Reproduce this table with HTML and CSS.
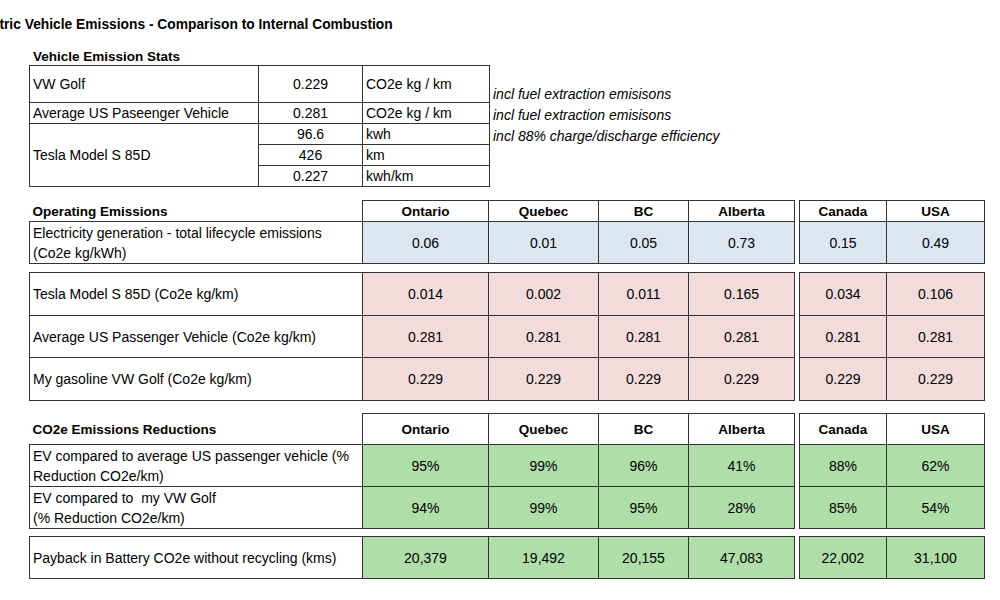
FILE: index.html
```html
<!DOCTYPE html>
<html>
<head>
<meta charset="utf-8">
<title>Electric Vehicle Emissions</title>
<link rel="stylesheet" href="styles.css">
</head>
<body>
<div class="title">Electric Vehicle Emissions - Comparison to Internal Combustion</div>
<div class="sheet">
  <div class="section-label">Vehicle Emission Stats</div>
  <table class="stats">
    <colgroup><col class="c-label"><col class="c-val"><col class="c-unit"><col class="c-note"></colgroup>
    <tr class="s38"><td>VW Golf</td><td class="num">0.229</td><td>CO2e kg / km</td><td class="note">incl fuel extraction emisisons</td></tr>
    <tr class="s20"><td>Average US Paseenger Vehicle</td><td class="num">0.281</td><td>CO2e kg / km</td><td class="note">incl fuel extraction emisisons</td></tr>
    <tr class="s21"><td rowspan="3">Tesla Model S 85D</td><td class="num">96.6</td><td>kwh</td><td class="note">incl 88% charge/discharge efficiency</td></tr>
    <tr class="s20"><td class="num">426</td><td>km</td><td class="note"></td></tr>
    <tr class="s21"><td class="num">0.227</td><td>kwh/km</td><td class="note"></td></tr>
  </table>

  <table class="grid">
    <colgroup>
      <col class="g-label"><col class="g-on"><col class="g-qc"><col class="g-bc"><col class="g-ab"><col class="g-gap"><col class="g-ca"><col class="g-us">
    </colgroup>
    <tr class="r21">
      <td class="blank sec">Operating Emissions</td>
      <td class="head">Ontario</td><td class="head">Quebec</td><td class="head">BC</td><td class="head">Alberta</td>
      <td class="blank"></td>
      <td class="head">Canada</td><td class="head">USA</td>
    </tr>
    <tr class="r42 blue">
      <td class="lbl">Electricity generation - total lifecycle emissions<br>(Co2e kg/kWh)</td>
      <td class="num">0.06</td><td class="num">0.01</td><td class="num">0.05</td><td class="num">0.73</td>
      <td class="blank"></td>
      <td class="num">0.15</td><td class="num">0.49</td>
    </tr>
    <tr class="r9 spacer"><td class="blank" colspan="8"></td></tr>
    <tr class="r43 pink">
      <td class="lbl">Tesla Model S 85D (Co2e kg/km)</td>
      <td class="num">0.014</td><td class="num">0.002</td><td class="num">0.011</td><td class="num">0.165</td>
      <td class="blank"></td>
      <td class="num">0.034</td><td class="num">0.106</td>
    </tr>
    <tr class="r42 pink">
      <td class="lbl">Average US Passenger Vehicle (Co2e kg/km)</td>
      <td class="num">0.281</td><td class="num">0.281</td><td class="num">0.281</td><td class="num">0.281</td>
      <td class="blank"></td>
      <td class="num">0.281</td><td class="num">0.281</td>
    </tr>
    <tr class="r43 pink">
      <td class="lbl">My gasoline VW Golf (Co2e kg/km)</td>
      <td class="num">0.229</td><td class="num">0.229</td><td class="num">0.229</td><td class="num">0.229</td>
      <td class="blank"></td>
      <td class="num">0.229</td><td class="num">0.229</td>
    </tr>
    <tr class="r13 spacer"><td class="blank" colspan="8"></td></tr>
    <tr class="r31">
      <td class="blank sec">CO2e Emissions Reductions</td>
      <td class="head">Ontario</td><td class="head">Quebec</td><td class="head">BC</td><td class="head">Alberta</td>
      <td class="blank"></td>
      <td class="head">Canada</td><td class="head">USA</td>
    </tr>
    <tr class="r42 green">
      <td class="lbl">EV compared to average US passenger vehicle (%<br>Reduction CO2e/km)</td>
      <td class="num">95%</td><td class="num">99%</td><td class="num">96%</td><td class="num">41%</td>
      <td class="blank"></td>
      <td class="num">88%</td><td class="num">62%</td>
    </tr>
    <tr class="r42 green">
      <td class="lbl">EV compared to&nbsp; my VW Golf<br>(% Reduction CO2e/km)</td>
      <td class="num">94%</td><td class="num">99%</td><td class="num">95%</td><td class="num">28%</td>
      <td class="blank"></td>
      <td class="num">85%</td><td class="num">54%</td>
    </tr>
    <tr class="r8 spacer"><td class="blank" colspan="8"></td></tr>
    <tr class="r42 green">
      <td class="lbl">Payback in Battery CO2e without recycling (kms)</td>
      <td class="num">20,379</td><td class="num">19,492</td><td class="num">20,155</td><td class="num">47,083</td>
      <td class="blank"></td>
      <td class="num">22,002</td><td class="num">31,100</td>
    </tr>
  </table>
</div>
</body>
</html>
```

FILE: styles.css
```css
html, body {
  margin: 0;
  background: #ffffff;
}
body {
  font-family: "Liberation Sans", Arial, sans-serif;
  font-size: 14px;
  color: #000000;
  overflow: hidden;
}
.title {
  margin-left: -29px;
  padding-top: 15px;
  line-height: 20px;
  font-size: 13.8px;
  font-weight: bold;
  white-space: nowrap;
}
.sheet {
  padding-left: 29px;
}
.section-label {
  margin-top: 12px;
  height: 18px;
  line-height: 20px;
  padding-left: 4px;
  font-size: 13.5px;
  font-weight: bold;
}
table {
  border-collapse: collapse;
  table-layout: fixed;
}
td {
  border: 1px solid #333333;
  padding: 0 3px;
  vertical-align: middle;
  white-space: nowrap;
  line-height: 20px;
}
.num {
  text-align: center;
}
.stats {
  width: 720px;
}
.c-label { width: 229px; }
.c-val { width: 104px; }
.c-unit { width: 127px; }
.c-note { width: 260px; }
.stats .note {
  border: none;
  font-style: italic;
  vertical-align: bottom;
  line-height: 18px;
}
.s38 { height: 37px; }
.s20 { height: 20px; }
.s21 { height: 21px; }
.r21 { height: 21px; }
.r42 { height: 42px; }
.r43 { height: 43px; }
.r31 { height: 31px; }
.r13 { height: 13px; }
.r9 { height: 9px; }
.r8 { height: 8px; }
.spacer td {
  padding: 0;
  line-height: 0;
  font-size: 0;
}
.grid {
  margin-top: 13px;
  width: 955px;
}
.g-label { width: 333px; }
.g-on { width: 126px; }
.g-qc { width: 110px; }
.g-bc { width: 90px; }
.g-ab { width: 106px; }
.g-gap { width: 5px; }
.g-ca { width: 87px; }
.g-us { width: 98px; }
.grid td.blank {
  border: none;
  background: #ffffff;
}
.grid td.sec {
  font-size: 13.5px;
  font-weight: bold;
  vertical-align: middle;
  line-height: 18px;
  padding-top: 2px;
}
.grid td.head {
  font-size: 13.5px;
  font-weight: bold;
  text-align: center;
  background: #ffffff;
  line-height: 18px;
  padding-top: 2px;
}
.blue td { background: #dce6f1; }
.pink td { background: #f2dcdb; }
.green td { background: #afdea8; }
.grid td.lbl {
  background: #ffffff;
}
```
